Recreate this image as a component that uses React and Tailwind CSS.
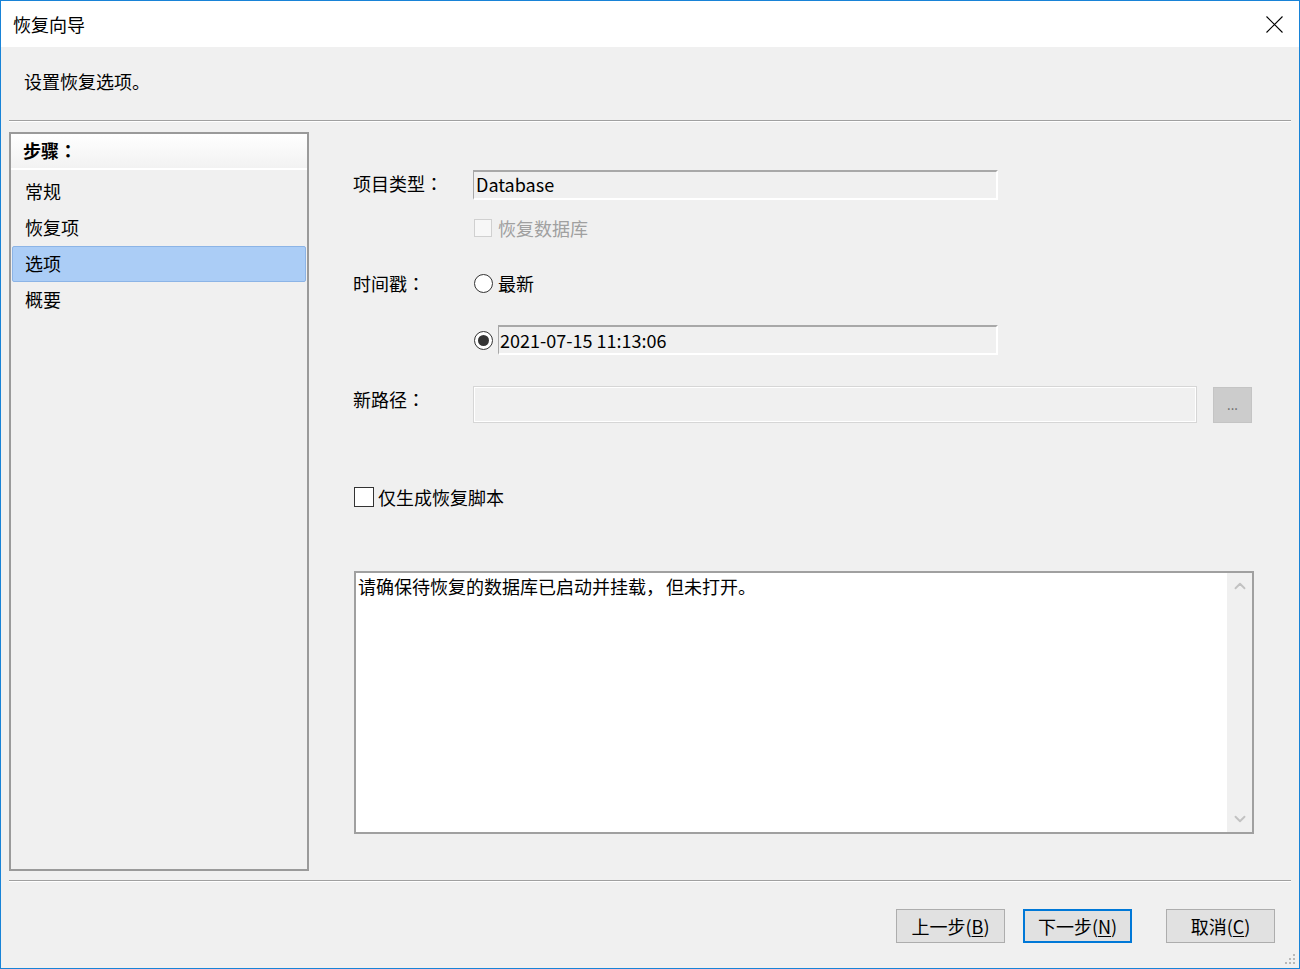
import { ChevronUp, ChevronDown } from "lucide-react";

const font = { fontFamily: '"Noto Sans CJK SC", "Noto Sans", sans-serif' };

// 全角标点居中显示
function P({ children }) {
  return <span style={{ fontFamily: '"Noto Sans CJK TC", sans-serif' }}>{children}</span>;
}

function Step({ label, active }) {
  return (
    <div
      className={
        "h-[36px] flex items-center mx-[1px] pl-[12px] pb-[2px] " +
        (active ? "bg-[#abcdf6] border border-[#8cb4e6] rounded-[2px]" : "border border-transparent")
      }
    >
      {label}
    </div>
  );
}

function Btn({ label, hot, primary }) {
  return (
    <button
      className={
        "w-[109px] h-[34px] flex items-center justify-center bg-[#e1e1e1] " +
        (primary ? "border-2 border-[#0078d7]" : "border border-[#adadad]")
      }
    >
      {label}(<span className="underline underline-offset-2">{hot}</span>)
    </button>
  );
}

export default function App() {
  return (
    <div
      className="w-[1300px] h-[969px] border border-[#1883d7] bg-[#f0f0f0] flex flex-col text-[18px] text-black relative"
      style={font}
    >
      {/* Title bar */}
      <div className="h-[46px] bg-white flex items-center justify-between pl-[12px] pr-[16px] shrink-0">
        <span>恢复向导</span>
        <svg width="17" height="17" viewBox="0 0 17 17">
          <path d="M0.5 0.5 L16.5 16.5 M16.5 0.5 L0.5 16.5" stroke="#000" strokeWidth="1.1" />
        </svg>
      </div>

      {/* Header */}
      <div className="h-[73px] pt-[21px] pl-[23px] shrink-0">设置恢复选项。</div>
      <div className="mx-[8px] h-[2px] border-t border-[#a0a0a0] border-b border-b-white shrink-0"></div>

      {/* Main */}
      <div className="flex mt-[10px] h-[739px] shrink-0">
        {/* Steps panel */}
        <div className="ml-[8px] w-[300px] border-2 border-[#9a9a9a] flex flex-col">
          <div className="h-[36px] flex items-center pl-[12px] pb-[1px] font-bold bg-gradient-to-b from-white to-[#f2f2f2] border-b-2 border-white">
            步骤<P>：</P>
          </div>
          <div className="pt-[4px] flex flex-col">
            <Step label="常规" />
            <Step label="恢复项" />
            <Step label="选项" active />
            <Step label="概要" />
          </div>
        </div>

        {/* Options */}
        <div className="ml-[44px] flex-1 pr-[45px] flex flex-col">
          <div className="flex items-center mt-[38px] h-[30px]">
            <div className="w-[120px] pb-[4px]">项目类型<P>：</P></div>
            <div className="w-[525px] h-[30px] border-t-2 border-l border-[#a8a8a8] border-r-2 border-b-2 border-r-white border-b-white flex items-center pl-[2px] pb-[2px] bg-[#f0f0f0]">
              Database
            </div>
          </div>

          <div className="flex items-center mt-[19px] h-[18px] pl-[121px] text-[#a0a0a0]">
            <div className="w-[18px] h-[18px] border border-[#d0d0d0] bg-[#f7f7f7] mr-[6px]"></div>
            恢复数据库
          </div>

          <div className="flex items-center mt-[36px] h-[20px]">
            <div className="w-[121px]">时间戳<P>：</P></div>
            <div className="w-[19px] h-[19px] rounded-full border border-[#333] bg-white mr-[5px]"></div>
            最新
          </div>

          <div className="flex items-center mt-[32px] h-[30px]">
            <div className="w-[121px]"></div>
            <div className="w-[19px] h-[19px] rounded-full border border-[#333] bg-white mr-[5px] flex items-center justify-center">
              <div className="w-[11px] h-[11px] rounded-full bg-[#333]"></div>
            </div>
            <div className="w-[500px] h-[30px] border-t-2 border-l border-[#a8a8a8] border-r-2 border-b-2 border-r-white border-b-white flex items-center pl-[1px]">
              2021-07-15 11:13:06
            </div>
          </div>

          <div className="flex items-start mt-[31px] h-[37px]">
            <div className="w-[120px] leading-[26px]">新路径<P>：</P></div>
            <div className="w-[724px] h-[37px] border border-[#d6d6d6] shadow-[inset_0_0_0_1px_#ffffff]"></div>
            <div className="ml-[16px] w-[39px] h-[36px] mt-[1px] bg-[#cccccc] border border-[#c4c4c4] flex items-center justify-center text-[#666] text-[13px] leading-none pb-[1px]">
              ...
            </div>
          </div>

          <div className="flex items-center mt-[64px] h-[20px] pl-[1px]">
            <div className="w-[20px] h-[20px] border-[1.5px] border-[#333] bg-white mr-[4px]"></div>
            仅生成恢复脚本
          </div>

          <div className="mt-[64px] ml-[1px] w-[900px] h-[263px] border-2 border-[#a0a0a0] bg-white flex">
            <div className="flex-1 pl-[2px]">
              请确保待恢复的数据库已启动并挂载<span className="mr-[2px]">，</span>但未打开。
            </div>
            <div className="w-[25px] bg-[#f0f0f0] flex flex-col items-center justify-between py-[4px] text-[#c2c2c2]">
              <ChevronUp size={18} strokeWidth={2.5} />
              <ChevronDown size={18} strokeWidth={2.5} />
            </div>
          </div>
        </div>
      </div>

      <div className="mx-[8px] mt-[9px] h-[2px] border-t border-[#a0a0a0] border-b border-b-white shrink-0"></div>

      {/* Buttons */}
      <div className="flex justify-end items-center mt-[27px] pr-[24px]">
        <Btn label="上一步" hot="B" />
        <div className="w-[18px]"></div>
        <Btn label="下一步" hot="N" primary />
        <div className="w-[34px]"></div>
        <Btn label="取消" hot="C" />
      </div>

      {/* Resize grip */}
      <svg className="absolute right-[3px] bottom-[3px]" width="12" height="12" viewBox="0 0 12 12">
        {[[9, 1], [9, 5], [5, 5], [9, 9], [5, 9], [1, 9]].map(([x, y], i) => (
          <rect key={i} x={x} y={y} width="2" height="2" fill="#b8b8b8" />
        ))}
      </svg>
    </div>
  );
}
